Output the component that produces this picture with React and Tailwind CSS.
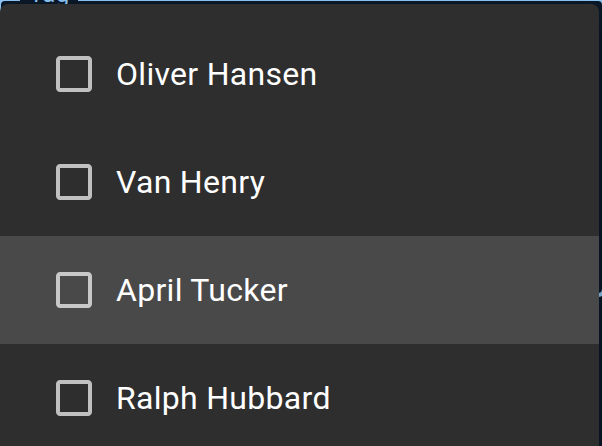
const names = ['Oliver Hansen', 'Van Henry', 'April Tucker', 'Ralph Hubbard'];

function BlankBox() {
  return (
    <svg viewBox="0 0 24 24" className="w-[48px] h-[48px] fill-white/70">
      <path d="M19 5v14H5V5h14m0-2H5c-1.11 0-2 .9-2 2v14c0 1.1.89 2 2 2h14c1.1 0 2-.9 2-2V5c0-1.1-.9-2-2-2z" />
    </svg>
  );
}

export default function App() {
  return (
    <div
      className="relative w-[602px] h-[446px] overflow-hidden bg-[#0a1929]"
      style={{ fontFamily: 'Roboto, "Liberation Sans", sans-serif' }}
    >
      {/* focused select outline behind the menu */}
      <div className="absolute top-[-3px] left-[-3px] right-[-4px] h-[300px] rounded-[8px] border-4 border-[#90caf9]" />
      <span className="absolute top-[-18px] left-[20px] px-[9px] bg-[#0a1929] text-[24px] leading-[24px] text-[#90caf9] tracking-[0.3px]">
        Tag
      </span>

      {/* menu paper */}
      <div className="absolute top-[4px] left-0 w-[599px] h-[470px] rounded-[8px] bg-[#2e2e2e] shadow-[0_10px_26px_rgba(0,0,0,0.4)]">
        <ul className="pt-[16px]">
          {names.map((name, i) => (
            <li
              key={name}
              className={`flex items-center h-[108px] pl-[32px] ${i === 2 ? 'bg-[#494949]' : ''}`}
            >
              <span className="p-[18px] flex">
                <BlankBox />
              </span>
              <span className="text-[32px] leading-[48px] tracking-[0.3px] text-white">{name}</span>
            </li>
          ))}
        </ul>
      </div>
    </div>
  );
}
